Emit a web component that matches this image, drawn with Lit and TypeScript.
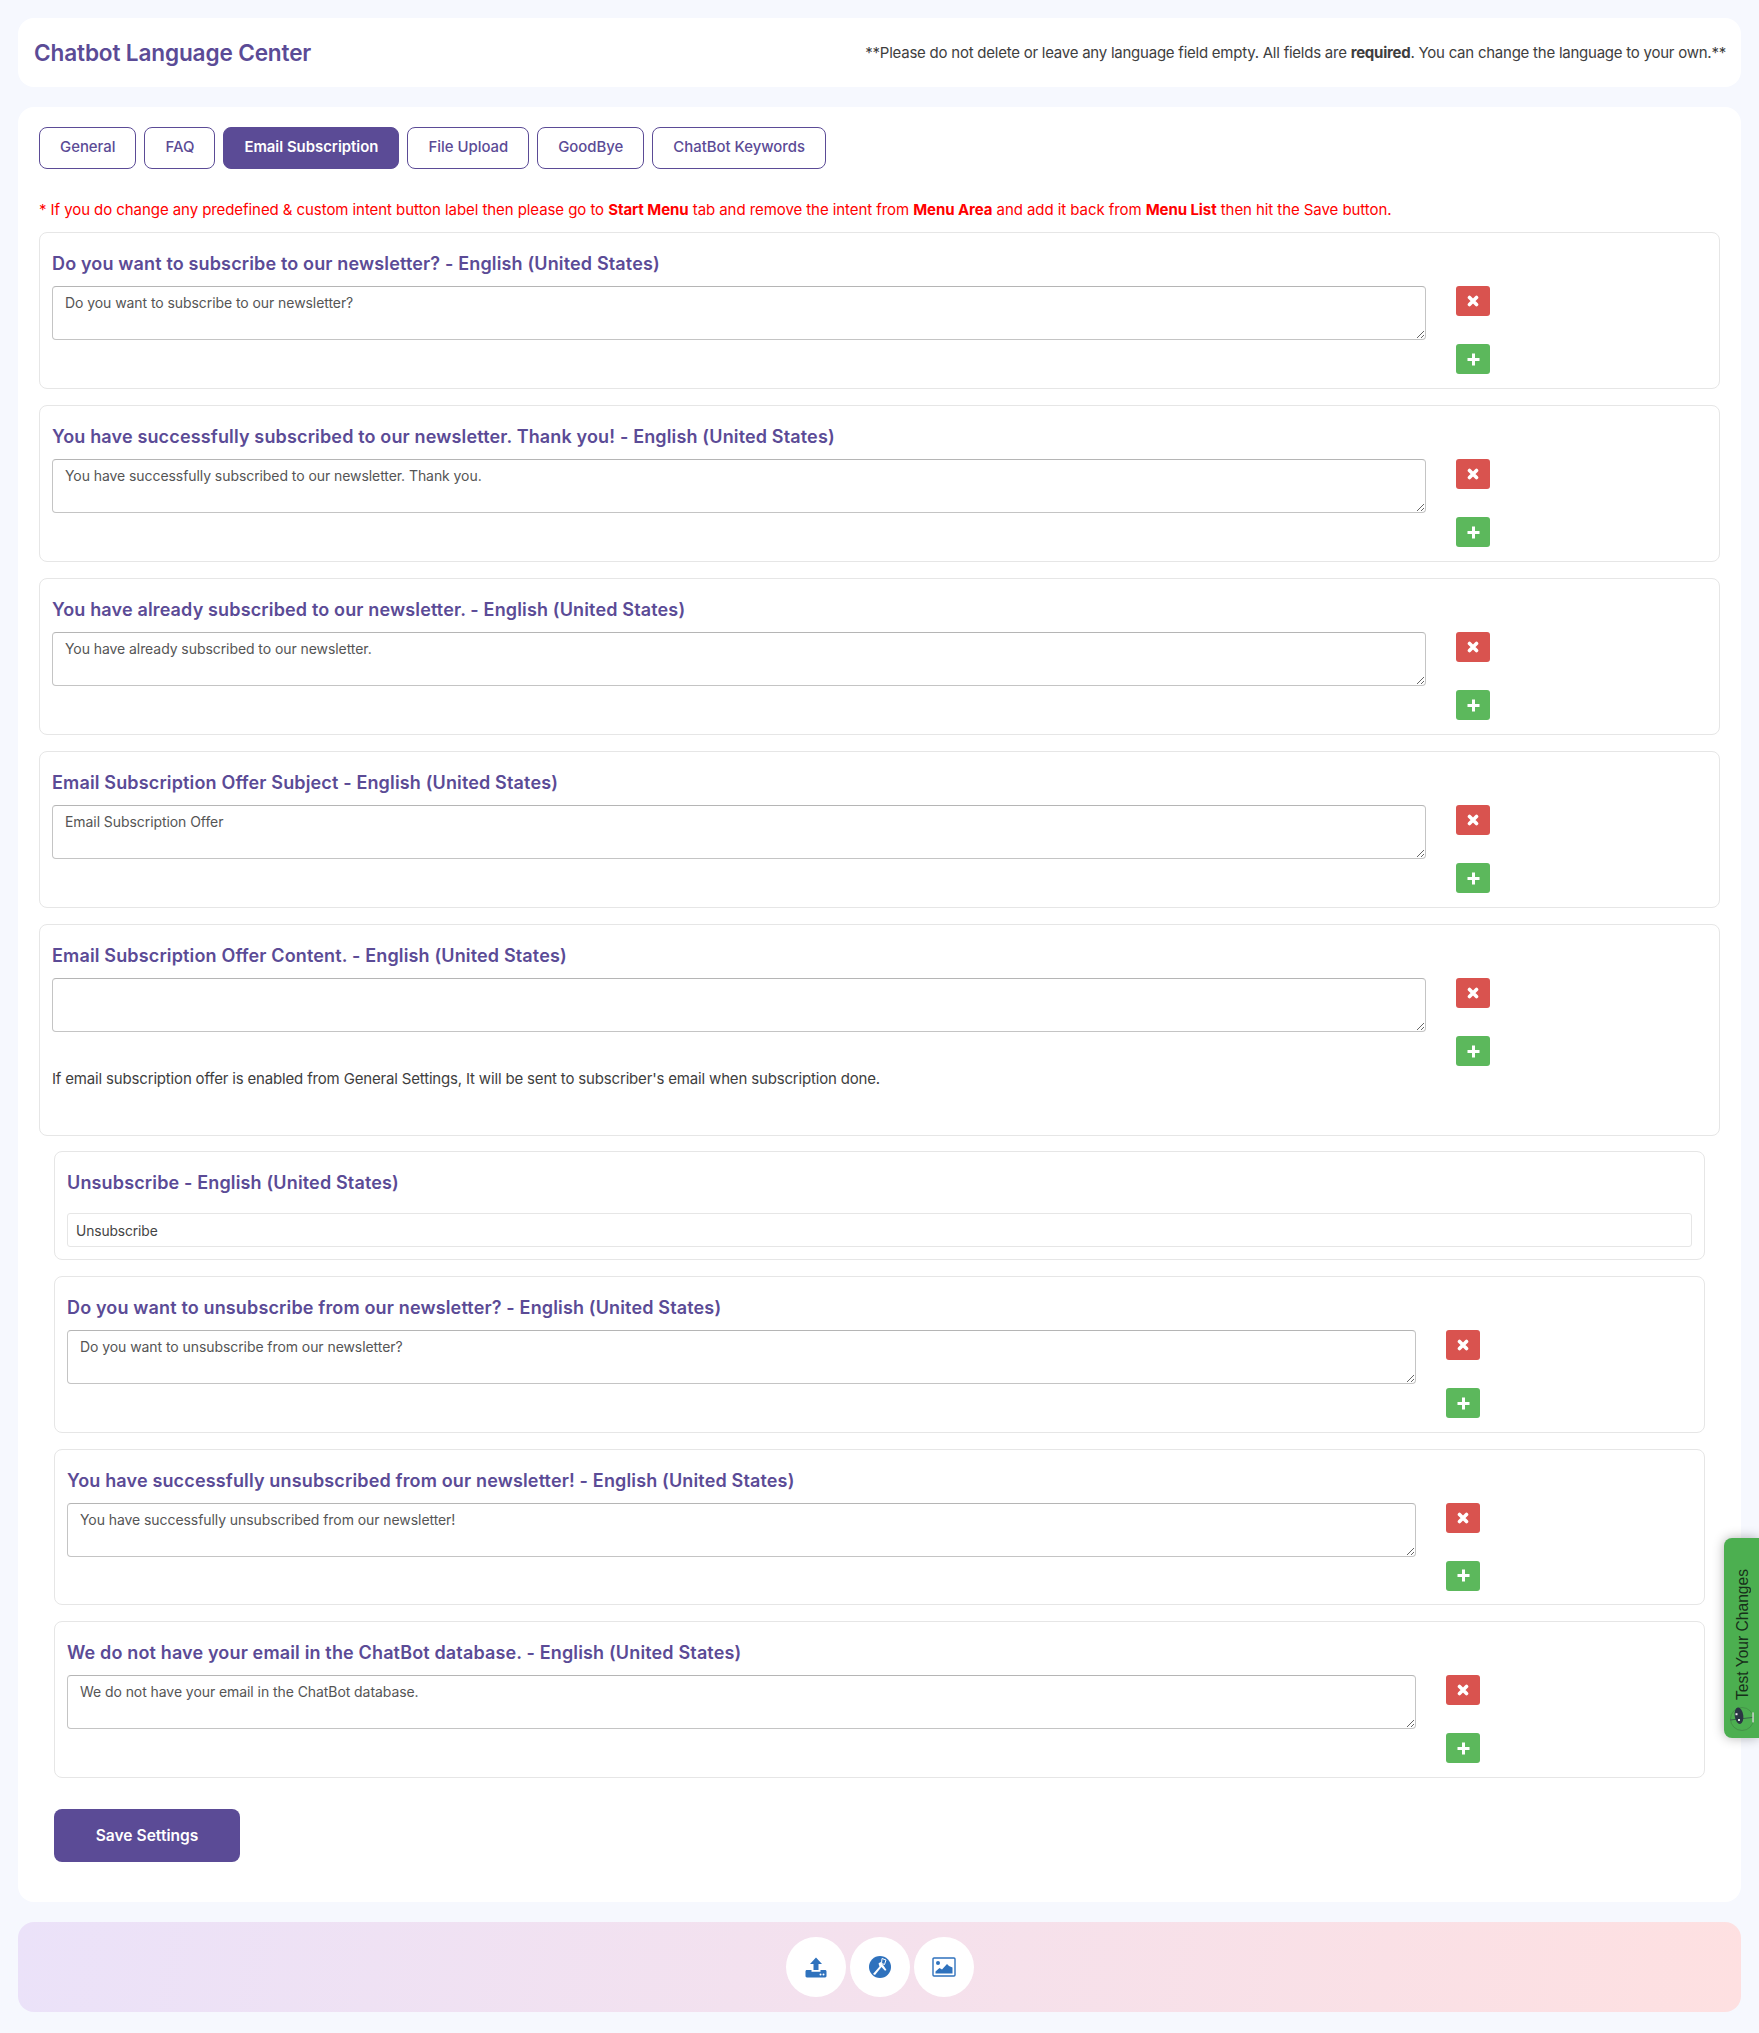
import { LitElement, html, css, nothing } from "lit";
import { customElement } from "lit/decorators.js";

const LANG = " - English (United States)";
const outer = [
  { q: "Do you want to subscribe to our newsletter?", v: "Do you want to subscribe to our newsletter?" },
  { q: "You have successfully subscribed to our newsletter. Thank you!", v: "You have successfully subscribed to our newsletter. Thank you." },
  { q: "You have already subscribed to our newsletter.", v: "You have already subscribed to our newsletter." },
  { q: "Email Subscription Offer Subject", v: "Email Subscription Offer" },
  { q: "Email Subscription Offer Content.", v: "", help: "If email subscription offer is enabled from General Settings, It will be sent to subscriber's email when subscription done." },
];
const inner = [
  { q: "Do you want to unsubscribe from our newsletter?", v: "Do you want to unsubscribe from our newsletter?" },
  { q: "You have successfully unsubscribed from our newsletter!", v: "You have successfully unsubscribed from our newsletter!" },
  { q: "We do not have your email in the ChatBot database.", v: "We do not have your email in the ChatBot database." },
];
const tabs = ["General", "FAQ", "Email Subscription", "File Upload", "GoodBye", "ChatBot Keywords"];

@customElement("app-root")
export class AppRoot extends LitElement {
  static styles = css`
    :host { display: block; position: relative; background: #f6f8fe; min-height: 2033px; padding: 18px; box-sizing: border-box; font-family: Inter, "Liberation Sans", sans-serif; color: #3e3e3e; overflow: hidden; }
    * { box-sizing: border-box; }
    .head { height: 69px; background: #fff; border-radius: 16px; display: flex; align-items: center; justify-content: space-between; padding: 0 15px 0 16px; }
    .head h1 { margin: 0; font-size: 22.6px; font-weight: 600; color: #5b4b96; letter-spacing: -0.15px; }
    .head p { margin: 0; font-size: 15px; letter-spacing: -0.24px; }
    .main { margin-top: 20px; height: 1795px; background: #fff; border-radius: 16px; padding: 20px 21px; }
    .tabs { display: flex; gap: 8px; }
    .tab { height: 42px; padding: 0 20px 2px; display: flex; align-items: center; border: 1px solid #5b4b96; border-radius: 8px; color: #5b4b96; font-size: 14.9px; font-weight: 500; background: #fff; font-family: inherit; }
    .tab.on { background: #5b4b96; color: #fff; font-weight: 600; }
    .note { margin: 0; height: 63px; padding-top: 31px; font-size: 15px; color: #f00; letter-spacing: -0.07px; line-height: 20px; white-space: nowrap; }
    .stack { display: flex; flex-direction: column; gap: 16px; }
    .inner { padding: 0 15px; margin-top: 15px; }
    .panel { border: 1px solid #e6e6e6; border-radius: 8px; padding: 20px 12px 0; height: 157px; }
    .panel.tall { height: 212px; }
    .inner .panel { height: 156.7px; }
    .inner .panel.input { height: 109px; }
    h2 { margin: 0; height: 22px; font-size: 18px; line-height: 22px; font-weight: 600; color: #5b4b96; letter-spacing: 0.15px; white-space: nowrap; }
    .row { display: flex; gap: 30px; margin-top: 11px; }
    .field { flex: 1; min-width: 0; }
    textarea { display: block; width: 100%; height: 54px; border: 1px solid #c4c4c4; border-top-color: #b5b5b5; border-radius: 4px; padding: 7px 12px; font: 14px/18px Inter, "Liberation Sans", sans-serif; letter-spacing: -0.07px; color: #555; background: #fff; resize: both; outline: none; }
    .help { margin: 37px 0 0; font-size: 15px; letter-spacing: -0.17px; color: #3e3e3e; line-height: 20px; white-space: nowrap; }
    .btns { width: 34px; display: flex; flex-direction: column; gap: 28px; flex: none; margin-right: 217px; }
    .inner .btns { margin-right: 212px; }
    .ib { width: 34px; height: 30px; border: 0; border-radius: 3px; padding: 0; display: flex; align-items: center; justify-content: center; color: #fff; }
    .x { width: 12px; height: 12px; fill: none; stroke: currentColor; stroke-width: 3.6; stroke-linecap: round; }
    .p { width: 13px; height: 13px; fill: currentColor; }
    .del { background: #d9534f; }
    .add { background: #5cb85c; }
    .text { display: block; width: 100%; height: 34px; margin-top: 19px; border: 1px solid #e6e6e6; border-radius: 3px; padding: 1px 8px 0; font: 13.8px Inter, "Liberation Sans", sans-serif; letter-spacing: -0.1px; color: #444; outline: none; }
    .save { margin: 31px 0 0 15px; display: flex; align-items: center; justify-content: center; width: 186px; height: 53px; border: 0; border-radius: 8px; background: #5b4b96; color: #fff; font: 600 15.6px Inter, "Liberation Sans", sans-serif; }
    .foot { margin-top: 20px; height: 90px; border-radius: 16px; background: linear-gradient(100deg, #ebe2f9, #fee0e1); display: flex; align-items: center; justify-content: center; gap: 4px; }
    .circle { width: 60px; height: 60px; border-radius: 50%; background: #fff; display: flex; align-items: center; justify-content: center; }
    .circle svg { width: 24px; height: 24px; display: block; }
    .test { position: absolute; right: 0; top: 1538px; width: 35px; height: 200px; background: #4caf50; border-radius: 8px 0 0 8px; box-shadow: 0 0 12px rgba(0,0,0,.3); display: flex; flex-direction: column-reverse; align-items: center; padding: 5px 0 6px; gap: 6px; }
    .test span { writing-mode: vertical-rl; transform: rotate(180deg); font: 15.6px "Liberation Sans", Arial, sans-serif; color: #17301a; white-space: nowrap; margin-left: 3px; }
    .test svg { width: 26px; height: 26px; flex: none; }
  `;

  private times = html`<svg class="x" viewBox="0 0 12 12"><path d="M2.500 2.500l7 7M9.500 2.500l-7 7"/></svg>`;
  private plus = html`<svg class="p" viewBox="0 0 13 13"><path d="M5 .5h3v4.500h4.500v3H8v4.500H5V8H.5V5H5z"/></svg>`;

  private row(p: { q: string; v: string; help?: string }) {
    return html`<div class="panel ${p.help ? "tall" : ""}">
      <h2>${p.q}${LANG}</h2>
      <div class="row">
        <div class="field">
          <textarea .value=${p.v}></textarea>
          ${p.help ? html`<p class="help">${p.help}</p>` : nothing}
        </div>
        <div class="btns">
          <button class="ib del">${this.times}</button>
          <button class="ib add">${this.plus}</button>
        </div>
      </div>
    </div>`;
  }

  render() {
    return html`
      <header class="head">
        <h1>Chatbot Language Center</h1>
        <p>**Please do not delete or leave any language field empty. All fields are <b>required</b>. You can change the language to your own.**</p>
      </header>
      <section class="main">
        <nav class="tabs">
          ${tabs.map((t) => html`<button class="tab ${t === "Email Subscription" ? "on" : ""}">${t}</button>`)}
        </nav>
        <p class="note">* If you do change any predefined &amp; custom intent button label then please go to <b>Start Menu</b> tab and remove the intent from <b>Menu Area</b> and add it back from <b>Menu List</b> then hit the Save button.</p>
        <div class="stack">${outer.map((p) => this.row(p))}</div>
        <div class="inner stack">
          <div class="panel input">
            <h2>Unsubscribe${LANG}</h2>
            <input class="text" .value=${"Unsubscribe"} />
          </div>
          ${inner.map((p) => this.row(p))}
        </div>
        <button class="save">Save Settings</button>
      </section>
      <footer class="foot">
        <div class="circle"><svg viewBox="0 0 24 24" fill="#2f72bd"><path d="M12 2.500l6 6.500h-3.500v6h-5V9H6z"/><path d="M1.500 16.500c0-.8.600-1.400 1.400-1.400H7.500v1.600h9v-1.600h4.600c.8 0 1.400.600 1.400 1.400v4.600c0 .8-.600 1.400-1.400 1.400H2.900c-.8 0-1.400-.600-1.400-1.400z"/><circle cx="16.500" cy="19.500" r="1" fill="#fff"/><circle cx="19.500" cy="19.500" r="1" fill="#fff"/></svg></div>
        <div class="circle"><svg viewBox="0 0 24 24"><circle cx="12" cy="12" r="11" fill="#2f72bd"/><path d="M5 19l6.500-7.500-1-3 2-1.500 3 3.500 3 4.500-1.500.8-3.500-3.800L7 20z" fill="#fff"/><path d="M14 3.500l4 1.500-1.500 4.500-3-1z" fill="none" stroke="#fff" stroke-width="1"/></svg></div>
        <div class="circle"><svg viewBox="0 0 24 24"><rect x="1" y="3" width="22" height="18" rx="1" fill="#fff" stroke="#2f72bd" stroke-width="1.400"/><circle cx="6" cy="8" r="2" fill="#2f72bd"/><path d="M3.500 18.500v-2l4-3.500 2.500 1.500 5-5.500 2 2 3.500 1.500v6z" fill="#2f72bd"/></svg></div>
      </footer>
      <aside class="test">
        <svg viewBox="0 0 26 26"><circle cx="13" cy="13" r="11.500" fill="none" stroke="#3f7f43" stroke-width=".6"/><path d="M1.300 14L24 11.400" stroke="#2b3644" stroke-width=".6"/><ellipse cx="10" cy="9.700" rx="4.300" ry="8.300" fill="#2b3644" transform="rotate(-8 10 9.700)"/><rect x="6.500" y="7.200" width="2" height="2" fill="#e8e8e8"/><rect x="9" y="13" width="2" height="2" fill="#e8e8e8"/><rect x="23.300" y="6.400" width="1.500" height="10" fill="#cfd8cf"/></svg>
        <span>Test Your Changes</span>
      </aside>
    `;
  }
}
